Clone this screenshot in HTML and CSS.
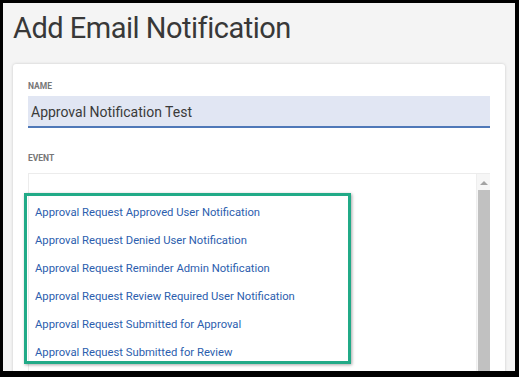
FILE: index.html
```html
<!doctype html>
<html lang="en-us">
  <head>
    <title>Add Email Notification</title>
    <link rel="stylesheet" href="styles.css">
  </head>
  <body>
    <div id="screen">
      <h1 id="title">Add Email Notification</h1>

      <div id="card">
        <label class="fieldLabel">Name</label>
        <div id="nameInput">Approval Notification Test</div>

        <label class="fieldLabel" id="eventLabel">Event</label>
        <div id="eventList">
          <ul id="options">
            <li>Approval Request Approved User Notification</li>
            <li>Approval Request Denied User Notification</li>
            <li>Approval Request Reminder Admin Notification</li>
            <li>Approval Request Review Required User Notification</li>
            <li>Approval Request Submitted for Approval</li>
            <li>Approval Request Submitted for Review</li>
          </ul>
          <div id="scrollbar">
            <div id="arrowUp"></div>
            <div id="thumb"></div>
          </div>
          <!-- highlight box drawn over the list -->
          <div id="highlight"></div>
        </div>
      </div>
    </div>
  </body>
</html>
```

FILE: styles.css
```css
html, body {
  margin: 0;
  height: 377px;
  overflow: hidden;
}

body {
  background-color: #000;
  padding: 3px 4px 6px 3px;
  box-sizing: border-box;
  font-family: Roboto, "Liberation Sans", sans-serif;
}

#screen {
  background-color: #f4f4f4;
  height: 100%;
  overflow: hidden;
  padding: 7px 10px 0 10px;
  box-sizing: border-box;
}

#title {
  margin: 0;
  font-size: 29px;
  line-height: 36px;
  font-weight: 400;
  letter-spacing: -0.5px;
  color: #383838;
}

#card {
  margin-top: 18px;
  background-color: #fff;
  border-radius: 3px;
  box-shadow: 0 0 3px rgba(0, 0, 0, 0.18);
  padding: 17px 15px 0 15px;
  height: 400px;
}

.fieldLabel {
  display: block;
  font-size: 8.5px;
  line-height: 10px;
  font-weight: 700;
  text-transform: uppercase;
  color: #777;
}

#nameInput {
  margin-top: 5px;
  height: 32px;
  box-sizing: border-box;
  padding: 2px 3px 0 3px;
  line-height: 28px;
  font-size: 14px;
  color: #3a3a3a;
  background-color: #e1e6f3;
  border-bottom: 2px solid #4f78b8;
}

#eventLabel {
  margin-top: 25px;
}

#eventList {
  position: relative;
  margin-top: 10px;
  display: flex;
  height: 260px;
  border: 1px solid #ececec;
  border-right: none;
  background-color: #fff;
}

#options {
  flex: 1;
  list-style: none;
  margin: 0;
  padding: 25px 0 0 6px;
}

#options li {
  height: 28px;
  line-height: 28px;
  font-size: 11.25px;
  color: #2c5eae;
}

#scrollbar {
  width: 13px;
  display: flex;
  flex-direction: column;
  align-items: center;
  background-color: #f6f6f6;
  border-left: 1px solid #eee;
}

#arrowUp {
  margin-top: 7px;
  width: 0;
  height: 0;
  border-left: 4px solid transparent;
  border-right: 4px solid transparent;
  border-bottom: 4px solid #a3a3a3;
}

#thumb {
  margin-top: 5px;
  width: 12px;
  flex: 1;
  background-color: #c1c1c1;
}

#highlight {
  position: absolute;
  left: -5px;
  top: 19px;
  width: 327px;
  height: 171px;
  box-sizing: border-box;
  border: 3px solid #21aa87;
  box-shadow: 1px 1px 3px rgba(0, 0, 0, 0.35);
}
```
